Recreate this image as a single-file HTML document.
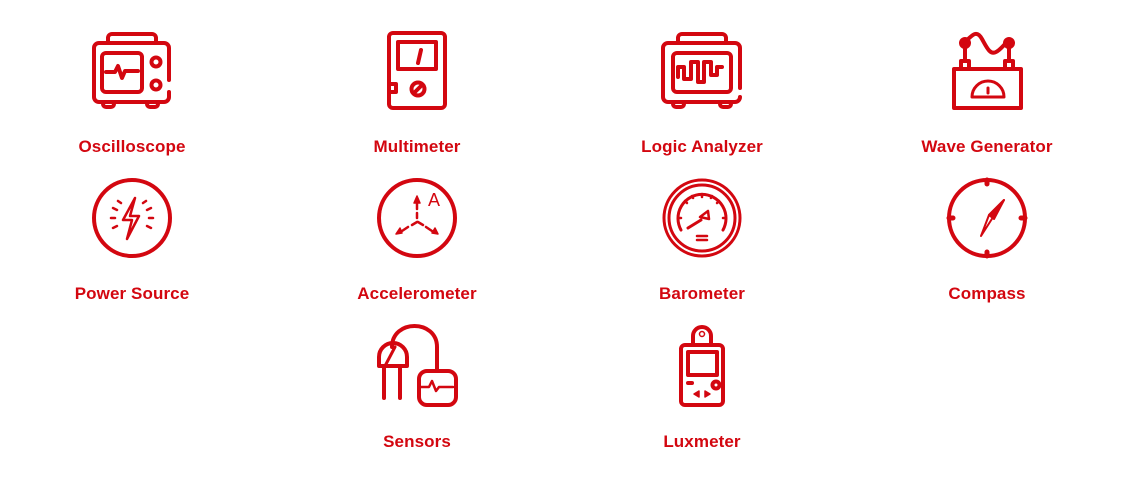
<!DOCTYPE html>
<html><head><meta charset="utf-8"><style>
html,body{margin:0;padding:0;background:#fff;width:1122px;height:485px;overflow:hidden;position:relative}
.t{position:absolute;width:240px;text-align:center;font-family:"Liberation Sans",sans-serif;font-weight:bold;font-size:17px;color:#d30710;line-height:20px;letter-spacing:0.1px}
svg{position:absolute;left:0;top:0}
</style></head><body>
<svg width="1122" height="485" viewBox="0 0 1122 485" fill="none" stroke="#d30710" stroke-width="4" stroke-linecap="round" stroke-linejoin="round">
<!-- Oscilloscope -->
<path d="M108 43V38a4 4 0 0 1 4-4h40a4 4 0 0 1 4 4v5"/>
<path d="M169 80V48a5 5 0 0 0-5-5H99a5 5 0 0 0-5 5v49a5 5 0 0 0 5 5h65a5 5 0 0 0 5-5v-5"/>
<rect x="102" y="53" width="40" height="39" rx="4"/>
<path d="M106 72h9l3-6 4 12 3-7h13"/>
<circle cx="156" cy="62" r="4.5"/><circle cx="156" cy="85" r="4.5"/>
<path d="M103 103v1a3 3 0 0 0 3 3h5a3 3 0 0 0 3-3v-1M147 103v1a3 3 0 0 0 3 3h5a3 3 0 0 0 3-3v-1"/>
<!-- Multimeter -->
<rect x="389" y="33" width="56" height="75" rx="4"/>
<rect x="398" y="42" width="38" height="27"/>
<path d="M421 50l-3 13"/>
<circle cx="418" cy="89" r="6.5"/><path d="M414 93l8-8"/>
<path d="M390 84h6v8h-6"/>
<!-- Logic analyzer -->
<path d="M678 42V38a4 4 0 0 1 4-4h40a4 4 0 0 1 4 4v4"/>
<path d="M740 88V48a5 5 0 0 0-5-5h-67a5 5 0 0 0-5 5v49a5 5 0 0 0 5 5h67a5 5 0 0 0 5-5"/>
<rect x="673" y="53" width="58" height="39" rx="4"/>
<path d="M678 77v-10h6v12h7v-17h7v20h6v-20h7v13h6v-8h5"/>
<path d="M673 103v1a3 3 0 0 0 3 3h5a3 3 0 0 0 3-3v-1M720 103v1a3 3 0 0 0 3 3h5a3 3 0 0 0 3-3v-1"/>
<!-- Wave generator -->
<rect x="954" y="69" width="67" height="39"/>
<path d="M961 68v-7h8v7M1005 68v-7h8v7M965 61V46M1009 61V46"/>
<path d="M965 42c8-8 12-12 17-3s8 16 14 13s9-10 13-10"/>
<circle cx="965" cy="43" r="4" fill="#d30710"/><circle cx="1009" cy="43" r="4" fill="#d30710"/>
<path d="M972 97a16 16 0 0 1 32 0z" stroke-width="3"/><path d="M988 88v5" stroke-width="3"/>
<!-- Power source -->
<circle cx="132" cy="218" r="38"/>
<path d="M135 198l-12 22h9l-5 19 12-23h-9z" stroke-width="2.5"/>
<path d="M111 218h4M149 218h4M113 208l4 2M113 228l4-2M151 208l-4 2M151 228l-4-2M118 201l3 2M146 201l-3 2" stroke-width="2.5"/>
<!-- Accelerometer -->
<circle cx="417" cy="218" r="38"/>
<path d="M417 203v6M417 213v5M417 222l-5 3M408 227l-6 4M418 222l5 3M426 227l6 4" stroke-width="2.5"/>
<path d="M414 203l3-7 3 7z M396 234l4-6 2 5z M438 234l-6-1 3-5z" fill="#d30710" stroke-width="1.5"/>
<text x="428" y="206" fill="#d30710" stroke="none" font-family="Liberation Sans,sans-serif" font-size="18">A</text>
<!-- Barometer -->
<circle cx="702" cy="218" r="38" stroke-width="3"/><circle cx="702" cy="218" r="33" stroke-width="3"/>
<path d="M681 230a24 24 0 1 1 42 0" stroke-width="3"/>
<path d="M678 218h3M723 218h3M685 201l2 2M719 201l-2 2M702 194v3M692 196l1 2M712 196l-1 2" stroke-width="2.5"/>
<path d="M688 228l13-8" stroke-width="3"/>
<path d="M700 217l8-6 1 8z" stroke-width="2.5"/>
<path d="M697 236h10M697 240h10" stroke-width="2.5"/>
<!-- Compass -->
<circle cx="987" cy="218" r="38"/>
<path d="M987 180v4M987 252v4M949 218h4M1021 218h4" stroke-width="5"/>
<path d="M1004 200l-23 36 8-21z" stroke-width="2"/>
<path d="M1004 200l-15 15 5 4z" fill="#d30710" stroke-width="2"/>
<!-- Sensors -->
<path d="M392 347c0-28 45-28 45 0v24"/>
<path d="M379 366v-9a12 12 0 0 1 28 0v9z"/>
<path d="M385 366l10-19" stroke-width="3"/>
<path d="M384 366v32M400 366v32"/>
<rect x="419" y="371" width="37" height="34" rx="8"/>
<path d="M421 387h8l3-6 4 10 3-4h14" stroke-width="2.5"/>
<!-- Luxmeter -->
<path d="M693 344v-8a9 9 0 0 1 18 0v8"/>
<circle cx="702" cy="334" r="2.5" stroke-width="1.5"/>
<rect x="681" y="345" width="42" height="60" rx="4"/>
<rect x="688" y="352" width="29" height="23"/>
<path d="M688 383h4"/>
<circle cx="716" cy="385" r="3.5"/>
<path d="M699 391l-5 3 5 3zM705 391l5 3-5 3z" fill="#d30710" stroke-width="1.5"/>
</svg>
<div class="t" style="left:12px;top:137px">Oscilloscope</div>
<div class="t" style="left:297px;top:137px">Multimeter</div>
<div class="t" style="left:582px;top:137px">Logic Analyzer</div>
<div class="t" style="left:867px;top:137px">Wave Generator</div>
<div class="t" style="left:12px;top:284px">Power Source</div>
<div class="t" style="left:297px;top:284px">Accelerometer</div>
<div class="t" style="left:582px;top:284px">Barometer</div>
<div class="t" style="left:867px;top:284px">Compass</div>
<div class="t" style="left:297px;top:432px">Sensors</div>
<div class="t" style="left:582px;top:432px">Luxmeter</div>
</body></html>
